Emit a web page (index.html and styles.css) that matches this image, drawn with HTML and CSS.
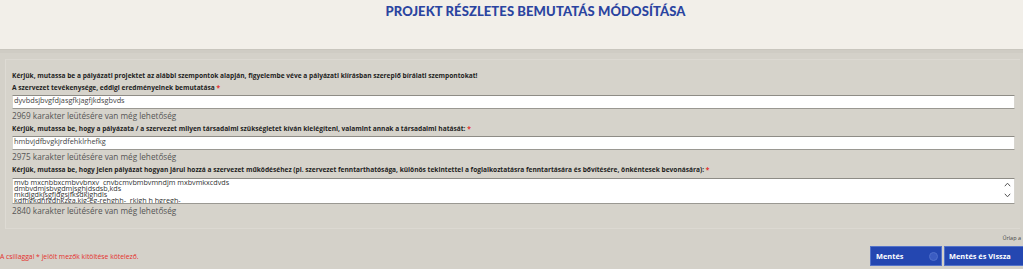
FILE: index.html
```html
<!DOCTYPE html>
<html lang="hu">
<head>
<meta charset="utf-8">
<title>Projekt részletes bemutatás módosítása</title>
<link rel="stylesheet" href="styles.css">
</head>
<body>
<header class="page-header">
  <h1 class="page-title">PROJEKT RÉSZLETES BEMUTATÁS MÓDOSÍTÁSA</h1>
</header>
<div class="band"></div>
<main class="main">
  <section class="form-panel">
    <p class="label">Kérjük, mutassa be a pályázati projektet az alábbi szempontok alapján, figyelembe véve a pályázati kiírásban szereplő bírálati szempontokat!</p>
    <p class="label">A szervezet tevékenysége, eddigi eredményeinek bemutatása <span class="req">*</span></p>
    <div class="input">dyvbdsjbvgfdjasgfkjagfjkdsgbvds</div>
    <p class="count">2969 karakter leütésére van még lehetőség</p>
    <p class="label">Kérjük, mutassa be, hogy a pályázata / a szervezet milyen társadalmi szükségletet kíván kielégíteni, valamint annak a társadalmi hatását: <span class="req">*</span></p>
    <div class="input">hmbvjdfbvgkjrdfehklrhefkg</div>
    <p class="count">2975 karakter leütésére van még lehetőség</p>
    <p class="label">Kérjük, mutassa be, hogy jelen pályázat hogyan járul hozzá a szervezet működéséhez (pl. szervezet fenntarthatósága, különös tekintettel a foglalkoztatásra fenntartására és bővítésére, önkéntesek bevonására): <span class="req">*</span></p>
    <div class="textarea">
      <div class="textarea-text">
        <div class="ta-line">mvb mxcnbbxcmbvvbnxv&nbsp; cnvbcmvbmbvmndjm mxbvmkxcdvds</div>
        <div class="ta-line">dmbvdmjsbvgdmjsghjdsdsb,kds</div>
        <div class="ta-line">mkdjgdkjsgfjdgsjfksdkjghdls</div>
        <div class="ta-line">kdfhgkdhfgdhkzga,kjg-eg-rehghh-&nbsp; rkjgh h hgregh-</div>
      </div>
      <div class="scroll-arrows">
        <svg width="7" height="5" viewBox="0 0 7 5"><path d="M0.8 4.2 L3.5 1.2 L6.2 4.2" fill="none" stroke="#555" stroke-width="1"/></svg>
        <svg width="7" height="5" viewBox="0 0 7 5"><path d="M0.8 0.8 L3.5 3.8 L6.2 0.8" fill="none" stroke="#555" stroke-width="1"/></svg>
      </div>
    </div>
    <p class="count">2840 karakter leütésére van még lehetőség</p>
  </section>
  <div class="form-meta">Űrlap a</div>
  <div class="footer-row">
    <p class="required-note">A csillaggal * jelölt mezők kitöltése kötelező.</p>
    <div class="buttons">
      <button class="btn btn-save">Mentés <span class="btn-dot"></span></button>
      <button class="btn btn-save-back">Mentés és Vissza</button>
    </div>
  </div>
</main>
</body>
</html>
```
FILE: styles.css
```css
html, body {
  margin: 0;
  padding: 0;
  overflow: hidden;
}
body {
  background: #d4d1c9;
  font-family: "Open Sans", "Liberation Sans", sans-serif;
  color: #222;
  width: 1023px;
  height: 269px;
}
.page-header {
  background: #f2efe9;
  height: 49px;
  padding: 4px 0 0 48px;
  box-sizing: border-box;
  text-align: center;
}
.page-title {
  margin: 0;
  font-family: Lato, "Open Sans", sans-serif;
  font-weight: 900;
  font-size: 13px;
  line-height: 14px;
  color: #2a44a0;
  letter-spacing: 0.1px;
}
.band {
  height: 4px;
  background: #cfccc4;
  border-top: 1px solid #c9c6be;
  box-sizing: border-box;
}
.main {
  display: flex;
  flex-direction: column;
}
.form-panel {
  margin: 6px 3px 0 5px;
  padding: 10px 5px 11px 6px;
  background: #d6d3cb;
  border-left: 1px solid #dedbd4;
  border-top: 1px solid #dcd9d2;
  border-bottom: 1px solid #dcd9d2;
  display: flex;
  flex-direction: column;
}
.label {
  margin: 0;
  font-size: 6.6px;
  line-height: 12px;
  font-weight: 700;
  color: #1e1e1e;
  white-space: nowrap;
}
.count + .label {
  margin-top: 1px;
}
.req {
  color: #e4302c;
}
.input {
  margin-top: 1px;
  height: 14px;
  box-sizing: border-box;
  background: #fff;
  border: 1px solid #d8d6d0;
  border-top-color: #8e8c86;
  border-bottom-color: #9a9892;
  font-size: 7.3px;
  line-height: 8px;
  padding: 0 0 0 1px;
  color: #444;
}
.count {
  margin: 1px 0 0;
  font-size: 8.2px;
  line-height: 12px;
  color: #555;
}
.textarea {
  position: relative;
  margin-top: 2px;
  height: 26px;
  box-sizing: border-box;
  background: #fff;
  border: 1px solid #d8d6d0;
  border-top-color: #8e8c86;
  border-bottom-color: #9a9892;
  overflow: hidden;
  color: #333;
}
.textarea-text {
  padding: 0 0 0 1px;
  display: flex;
  flex-direction: column;
}
.ta-line {
  font-size: 7.2px;
  line-height: 6px;
  height: 6px;
  white-space: nowrap;
}
.scroll-arrows {
  position: absolute;
  right: 3px;
  top: 3px;
  display: flex;
  flex-direction: column;
  gap: 6px;
}
.scroll-arrows svg {
  display: block;
}
.form-meta {
  margin-top: 5px;
  text-align: right;
  font-size: 5.5px;
  line-height: 8px;
  color: #444;
  padding-right: 2px;
}
.footer-row {
  margin-top: 4px;
  display: flex;
  justify-content: space-between;
  align-items: center;
}
.required-note {
  margin: 0;
  font-size: 6.8px;
  color: #e4302c;
  line-height: 10px;
  padding-top: 2px;
}
.buttons {
  display: flex;
  gap: 2px;
}
.btn {
  height: 20px;
  margin: 0;
  box-sizing: border-box;
  background: #2447b1;
  border: 1px solid #5473c9;
  color: #fff;
  font-family: "Open Sans", "Liberation Sans", sans-serif;
  font-weight: 700;
  font-size: 7.4px;
  text-align: left;
  display: flex;
  align-items: center;
  justify-content: space-between;
  padding: 0 0 0 5px;
}
.btn-save {
  width: 72px;
  padding-right: 3px;
}
.btn-save-back {
  width: 79px;
  padding-left: 4px;
  border-right: none;
}
.btn-dot {
  width: 9px;
  height: 9px;
  border-radius: 50%;
  background: #3b5cc2;
  border: 1px solid #4f6fcc;
  box-sizing: border-box;
}
```
